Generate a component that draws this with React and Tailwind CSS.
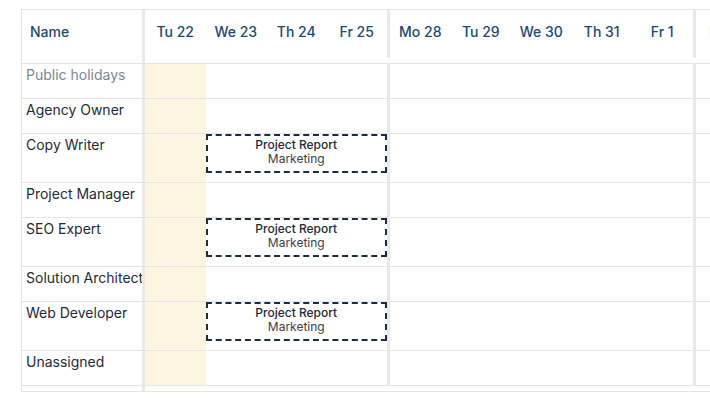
import React from "react";

const WEEK1 = ["Tu 22", "We 23", "Th 24", "Fr 25"];
const WEEK2 = ["Mo 28", "Tu 29", "We 30", "Th 31", "Fr 1"];

const ROWS = [
  { name: "Public holidays", muted: true },
  { name: "Agency Owner" },
  { name: "Copy Writer", event: true },
  { name: "Project Manager" },
  { name: "SEO Expert", event: true },
  { name: "Solution Architect" },
  { name: "Web Developer", event: true },
  { name: "Unassigned" },
];

function Sep({ short }) {
  return <div className={`w-[3px] shrink-0 bg-[#e8e8e8] ${short ? "h-[48px] self-start" : "self-stretch"}`} />;
}

function EventBox() {
  return (
    <div className="w-[181.5px] shrink-0">
      <div className="h-[39px] border-2 border-dashed border-[#1b2d45] pt-[2px] text-center text-xs leading-[14px]">
        <div className="font-medium text-[#1f2937]">Project Report</div>
        <div className="text-[#374151]">Marketing</div>
      </div>
    </div>
  );
}

function Row({ row }) {
  return (
    <div className={`flex border-b border-[#e5e5e5] ${row.event ? "h-[49px]" : "h-[35px]"}`}>
      <div
        className={`w-[120px] shrink-0 overflow-hidden whitespace-nowrap pl-1 pt-px text-sm leading-5 ${
          row.muted ? "text-[#7b8794]" : "text-[#1f2937]"
        }`}
      >
        {row.name}
      </div>
      <Sep />
      <div className="w-[60.5px] shrink-0 bg-[#fcf6e1]" />
      {row.event ? <EventBox /> : <div className="w-[181.5px] shrink-0" />}
      <Sep />
      <div className="w-[302.5px] shrink-0" />
      <Sep />
      <div className="flex-1" />
    </div>
  );
}

export default function App() {
  return (
    <div className="h-[407px] w-[710px] overflow-hidden bg-white pl-[21px] pt-[9px] font-[family-name:Inter,sans-serif]">
      <div className="w-[800px] border-l border-t border-[#e5e5e5]">
        {/* Header */}
        <div className="flex h-[54px] border-b border-[#e5e5e5] text-sm font-medium leading-5 text-[#1c4874]">
          <div className="w-[120px] shrink-0 pl-2 pt-3">Name</div>
          <Sep />
          {WEEK1.map((d) => (
            <div key={d} className="w-[60.5px] shrink-0 pt-3 text-center">{d}</div>
          ))}
          <Sep short />
          {WEEK2.map((d) => (
            <div key={d} className="w-[60.5px] shrink-0 pt-3 text-center">{d}</div>
          ))}
          <Sep short />
          <div className="w-[60.5px] shrink-0 pt-3 text-center opacity-30">Mo 4</div>
        </div>

        {ROWS.map((r) => (
          <Row key={r.name} row={r} />
        ))}

        <div className="flex h-[6px] border-b border-[#e5e5e5]">
          <div className="w-[120px] shrink-0" />
          <Sep />
        </div>
      </div>
    </div>
  );
}
